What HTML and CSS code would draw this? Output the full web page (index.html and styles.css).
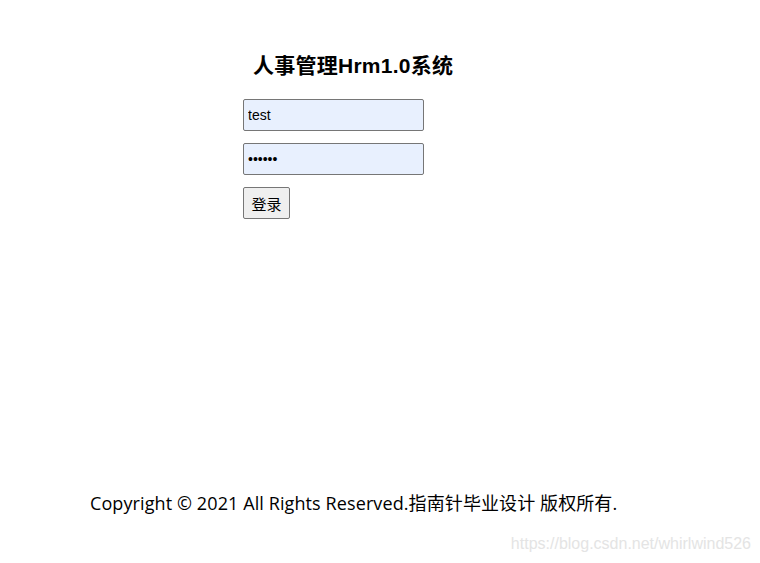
FILE: index.html
```html
<!DOCTYPE html>
<html lang="zh-CN">
  <head>
    <meta charset="UTF-8" />
    <title>人事管理Hrm1.0系统</title>
    <link rel="stylesheet" href="styles.css">
  </head>
  <body>
    <main class="login">
      <h1 class="title">人事管理Hrm1.0系统</h1>
      <form class="login-form">
        <input type="text" class="field" name="username" value="test" />
        <input type="password" class="field" name="password" value="123456" />
        <button type="submit" class="btn">登录</button>
      </form>
    </main>

    <footer class="footer">
      Copyright © 2021 All Rights Reserved.指南针毕业设计 版权所有.
    </footer>

    <div class="watermark">https://blog.csdn.net/whirlwind526</div>
  </body>
</html>
```

FILE: styles.css
```css
* {
  box-sizing: border-box;
  margin: 0;
  padding: 0;
}

body {
  font-family: "Liberation Sans", "Noto Sans CJK SC", sans-serif;
  background: #fff;
  color: #000;
  width: 760px;
  height: 563px;
  position: relative;
  overflow: hidden;
}

.login {
  padding: 52px 0 0 243px;
}

.title {
  font-size: 21px;
  font-weight: 700;
  letter-spacing: 0.25px;
  line-height: 28px;
  margin: 0 0 19px 10px;
}

.login-form {
  display: flex;
  flex-direction: column;
  align-items: flex-start;
  gap: 12px;
}

.field {
  width: 181px;
  height: 32px;
  padding: 0 4px;
  font-family: "Liberation Sans", sans-serif;
  font-size: 14px;
  color: #000;
  background: #e8f0fe;
  border: 1px solid #767676;
  border-radius: 2px;
}

.btn {
  width: 47px;
  height: 32px;
  font-family: "Noto Sans CJK SC", sans-serif;
  font-size: 15px;
  background: #efefef;
  border: 1px solid #767676;
  border-radius: 2px;
  color: #000;
}

.footer {
  margin: 272px 0 0 90px;
  font-family: "Open Sans", "Noto Sans CJK SC", sans-serif;
  font-size: 18px;
  letter-spacing: 0.1px;
  line-height: 24px;
}

.watermark {
  position: absolute;
  right: 9px;
  bottom: 10px;
  font-family: "Liberation Sans", sans-serif;
  font-size: 16px;
  color: #e4e4e4;
}
```
